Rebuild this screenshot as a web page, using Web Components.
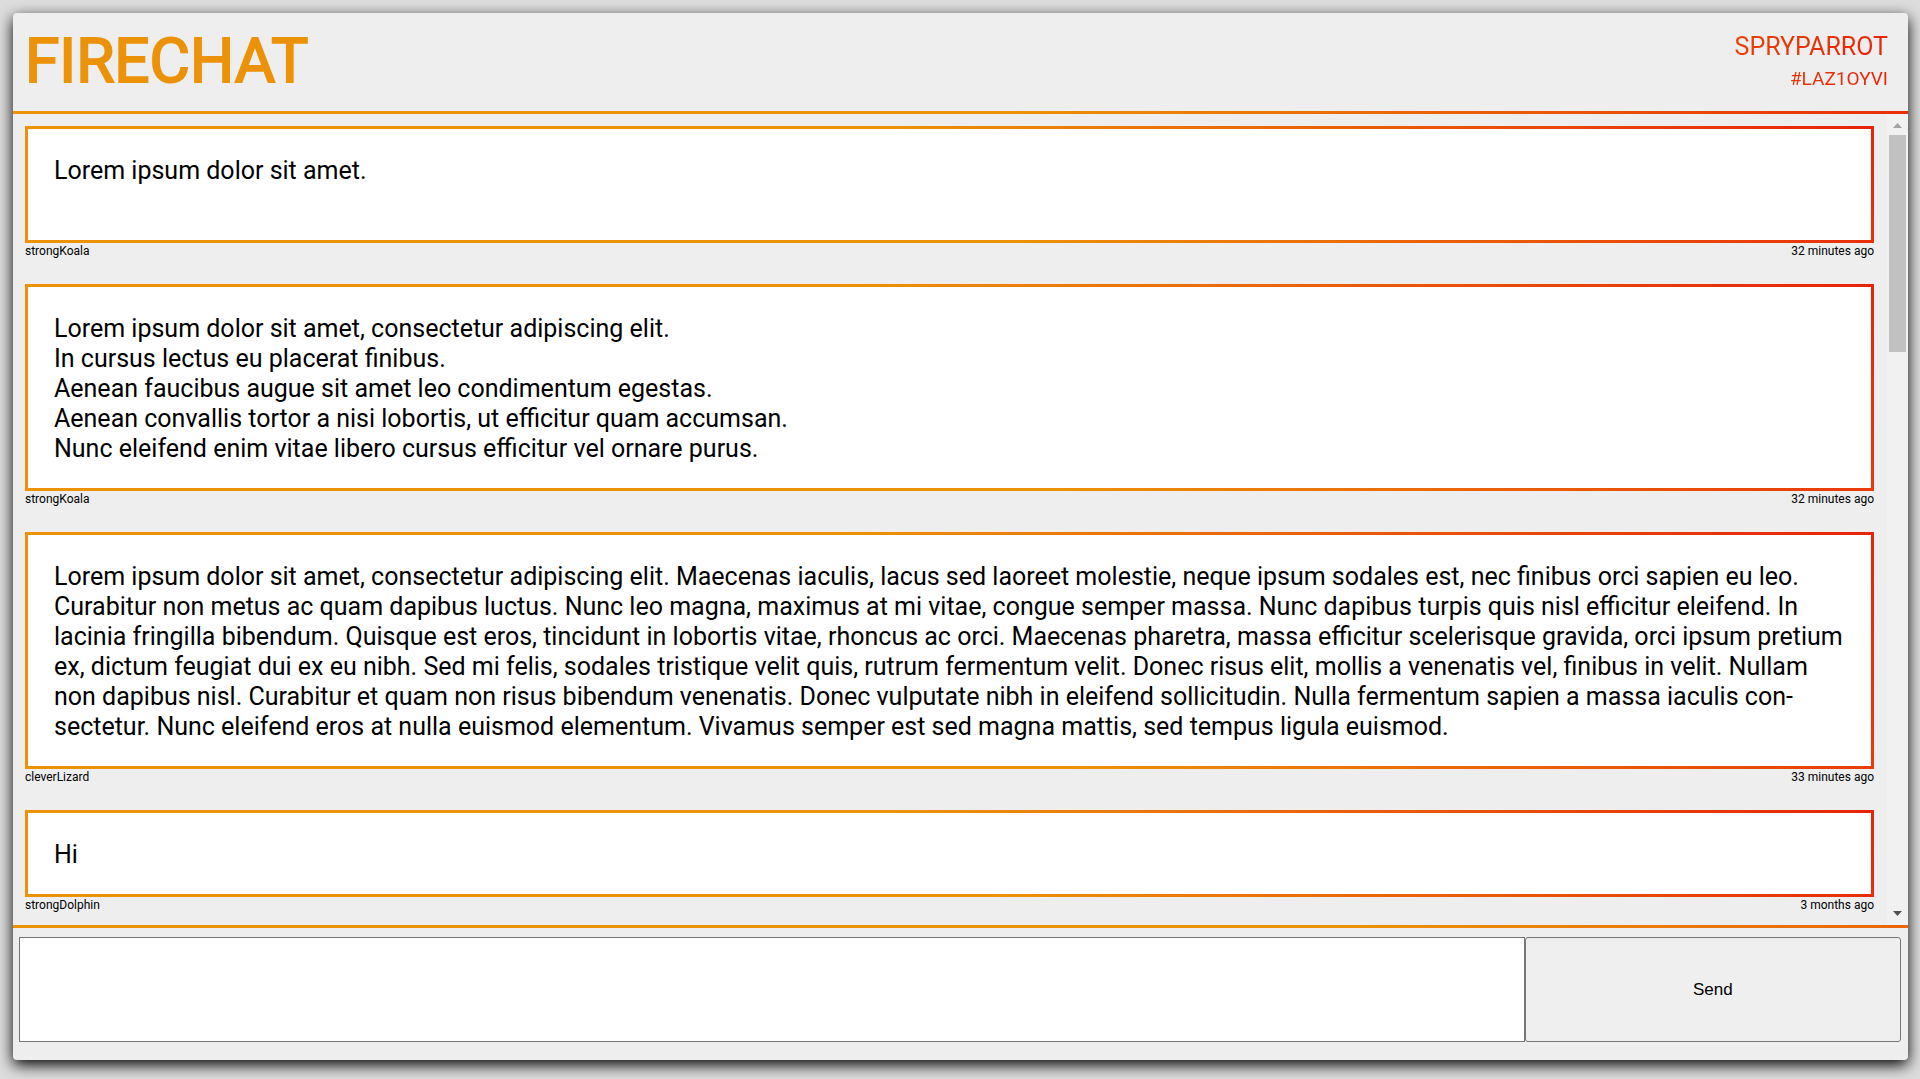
<!DOCTYPE html>
<html lang="en">
<head>
<meta charset="utf-8">
<title>Firechat</title>
<style>
  html, body { margin: 0; height: 100%; }
  body {
    --amber: #ec9208;
    --red: #e82308;
    --panel: #eee;
    --fire: linear-gradient(45deg, var(--amber) 50%, var(--red));
    display: flex;
    box-sizing: border-box;
    padding: 13px 12px 19px 13px;
    background: #ddd;
    color: #000;
    font-family: Roboto, "Liberation Sans", sans-serif;
  }
</style>
</head>
<body>
<chat-app>
  <chat-header slot="header" user="spryParrot" tag="#laz1oyvi">Firechat</chat-header>
  <chat-message author="strongKoala" time="32 minutes ago">Lorem ipsum dolor sit amet.<br><br></chat-message>
  <chat-message author="strongKoala" time="32 minutes ago">Lorem ipsum dolor sit amet, consectetur adipiscing elit.<br>In cursus lectus eu placerat finibus.<br>Aenean faucibus augue sit amet leo condimentum egestas.<br>Aenean convallis tortor a nisi lobortis, ut efficitur quam accumsan.<br>Nunc eleifend enim vitae libero cursus efficitur vel ornare purus.</chat-message>
  <chat-message author="cleverLizard" time="33 minutes ago">Lorem ipsum dolor sit amet, consectetur adipiscing elit. Maecenas iaculis, lacus sed laoreet molestie, neque ipsum sodales est, nec finibus orci sapien eu leo. Curabitur non metus ac quam dapibus luctus. Nunc leo magna, maximus at mi vitae, congue semper massa. Nunc dapibus turpis quis nisl efficitur eleifend. In lacinia fringilla bibendum. Quisque est eros, tincidunt in lobortis vitae, rhoncus ac orci. Maecenas pharetra, massa efficitur scelerisque gravida, orci ipsum pretium ex, dictum feugiat dui ex eu nibh. Sed mi felis, sodales tristique velit quis, rutrum fermentum velit. Donec risus elit, mollis a venenatis vel, finibus in velit. Nullam non dapibus nisl. Curabitur et quam non risus bibendum venenatis. Donec vulputate nibh in eleifend sollicitudin. Nulla fermentum sapien a massa iaculis con&shy;sectetur. Nunc eleifend eros at nulla euismod elementum. Vivamus semper est sed magna mattis, sed tempus ligula euismod.</chat-message>
  <chat-message author="strongDolphin" time="3 months ago">Hi</chat-message>
  <chat-composer slot="composer"></chat-composer>
</chat-app>
<script>
  const define = (name, html, setup) => customElements.define(name, class extends HTMLElement {
    constructor() {
      super();
      this.attachShadow({ mode: "open" }).innerHTML = html;
    }
    connectedCallback() {
      if (setup) setup(this, this.shadowRoot);
    }
  });

  define("chat-app", `
    <style>
      :host {
        flex: 1; min-width: 0; display: flex; flex-direction: column;
        background: var(--panel); border-radius: 4px;
        box-shadow: 0 5px 15px #000;
      }
      .body { flex: 1; min-height: 0; display: flex; }
      .list {
        flex: 1; min-width: 0; overflow: hidden;
        display: flex; flex-direction: column; gap: 24px;
        padding: 12px 13px 0 12px;
      }
    </style>
    <slot name="header"></slot>
    <div class="body">
      <main class="list"><slot></slot></main>
      <chat-scrollbar></chat-scrollbar>
    </div>
    <slot name="composer"></slot>`);

  define("chat-header", `
    <style>
      :host {
        display: flex; justify-content: space-between; align-items: flex-start;
        box-sizing: border-box; height: 101px; padding: 10px 20px 0 12px;
        border-bottom: 3px solid;
        border-image: var(--fire) 1;
        text-transform: uppercase;
      }
      h1 {
        margin: 0; font-size: 62px; line-height: 76px; font-weight: 400;
        color: var(--amber); -webkit-text-stroke: 2px var(--amber);
      }
      .who {
        margin-top: 8px; text-align: right; line-height: 32px;
        background: linear-gradient(90deg, #e84008, var(--red));
        -webkit-background-clip: text; background-clip: text; color: transparent;
      }
      .name { font-size: 25px; }
      .tag { font-size: 19px; }
    </style>
    <h1><slot></slot></h1>
    <div class="who"><div class="name"></div><div class="tag"></div></div>`,
    (el, root) => {
      root.querySelector(".name").textContent = el.getAttribute("user");
      root.querySelector(".tag").textContent = el.getAttribute("tag");
    });

  define("chat-message", `
    <style>
      :host { display: block; flex: none; }
      .bubble {
        padding: 27px 26px 24px; background: #fff;
        border: 3px solid;
        border-image: var(--fire) 1;
        font-size: 25px; line-height: 30px;
      }
      .meta { display: flex; justify-content: space-between; font-size: 12px; line-height: 17px; }
    </style>
    <div class="bubble"><slot></slot></div>
    <div class="meta"><span class="author"></span><span class="time"></span></div>`,
    (el, root) => {
      root.querySelector(".author").textContent = el.getAttribute("author");
      root.querySelector(".time").textContent = el.getAttribute("time");
    });

  define("chat-scrollbar", `
    <style>
      :host {
        display: flex; flex-direction: column; align-items: center;
        box-sizing: border-box; width: 21px; background: #f1f1f1;
      }
      svg { display: block; width: 21px; height: 21px; flex: none; }
      .track { flex: 1; width: 17px; }
      .thumb { height: 28.2%; background: #c1c1c1; }
    </style>
    <svg viewBox="0 0 21 21"><path d="M6 14h9l-4.500-5z" fill="#a3a3a3"/></svg>
    <div class="track"><div class="thumb"></div></div>
    <svg viewBox="0 0 21 21"><path d="M6 7h9l-4.500 5z" fill="#505050"/></svg>`);

  define("chat-composer", `
    <style>
      :host {
        display: block; padding: 9px 7px 18px 6px;
        border-top: 3px solid;
        border-image: linear-gradient(90deg, var(--amber) 70%, #ea6608) 1;
      }
      form { display: flex; height: 105px; }
      textarea, button { box-sizing: border-box; margin: 0; border: 1px solid #767676; font: 17px "Liberation Sans", Arial, sans-serif; }
      textarea { width: 80%; padding: 3px; resize: none; background: #fff; }
      button { width: 20%; padding: 0; border-radius: 3px; background: #efefef; color: #000; }
    </style>
    <form onsubmit="return false">
      <textarea aria-label="Message"></textarea>
      <button type="submit">Send</button>
    </form>`);
</script>
</body>
</html>
